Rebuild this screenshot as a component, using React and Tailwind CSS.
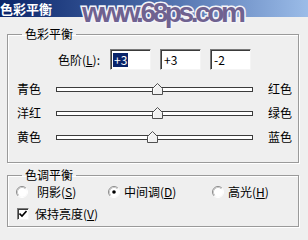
import React from "react";

function Radio({ checked }) {
  return (
    <svg width="12" height="12" viewBox="0 0 12 12" className="shrink-0">
      <circle cx="6" cy="6" r="5" fill="#fff" />
      <path d="M2.11 9.89 A5.5 5.5 0 0 1 9.89 2.11" fill="none" stroke="#8a8a8a" strokeWidth="1" />
      <path d="M9.89 2.11 A5.5 5.5 0 0 1 2.11 9.89" fill="none" stroke="#ffffff" strokeWidth="1" />
      <path d="M2.82 9.18 A4.5 4.5 0 0 1 9.18 2.82" fill="none" stroke="#c8c8c8" strokeWidth="1" />
      {checked && <circle cx="6" cy="6" r="1.8" fill="#000" />}
    </svg>
  );
}

function Thumb() {
  return (
    <svg width="11" height="12" viewBox="0 0 11 12">
      <path d="M0.5 5.5 L5.5 0.5 L10.5 5.5 L10.5 11.5 L0.5 11.5 Z" fill="#f0f0f0" stroke="#505050" strokeWidth="1" />
      <path d="M1.5 10.5 L1.5 5.9 L5.5 1.9" fill="none" stroke="#ffffff" strokeWidth="1" />
    </svg>
  );
}

function SliderRow({ left, right, value }) {
  const center = 98.5 + value * 0.985;
  return (
    <div className="h-[24px] flex items-center pl-[9px]">
      <span className="w-[39px] leading-[14px]">{left}</span>
      <div className="relative w-[197px] h-[5px] border border-[#3c3c3c] bg-white">
        <div className="absolute top-[-5px]" style={{ left: center - 6.5 }}>
          <Thumb />
        </div>
      </div>
      <span className="ml-[15px] leading-[14px]">{right}</span>
    </div>
  );
}

function Field({ children, first }) {
  return (
    <div className="relative w-[41px] h-[21px] bg-white border border-t-[#7a7a7a] border-l-[#7a7a7a] border-r-[#f4f4f4] border-b-[#f4f4f4] shadow-[inset_1px_1px_0_#3a3a3a] flex items-center pl-[2px]">
      {first ? (
        <span className="bg-[#0a246a] text-white leading-[14px] px-[1px]">{children}</span>
      ) : (
        <span className="leading-[14px] px-[1px]">{children}</span>
      )}
    </div>
  );
}

export default function App() {
  return (
    <div className="relative w-[308px] h-[240px] overflow-hidden bg-[#efefef] text-[12px] text-black font-['Noto_Sans_CJK_SC',sans-serif]">
      <div className="h-[17px] bg-gradient-to-r from-[#0a246a] via-[#4a6aa8] to-[#9bbce8] flex items-center">
        <span className="text-white font-bold text-[13px] leading-[15px]">色彩平衡</span>
      </div>

      <div className="absolute left-[82px] top-[1px] font-['Liberation_Sans',sans-serif] font-bold text-[28px] leading-[24px] tracking-[-3.4px] text-[#6f6290] [-webkit-text-stroke:3px_#f4f4f8] [paint-order:stroke_fill]">
        www.68ps.com
      </div>

      <fieldset className="ml-[7px] mt-[10px] w-[292px] border border-[#9a9a9a] shadow-[inset_1px_1px_0_#fff,1px_1px_0_#fff] pb-[13px]">
        <legend className="ml-[14px] px-[3px] leading-[14px]">色彩平衡</legend>
        <div className="flex items-center pt-[8px] h-[29px]">
          <span className="w-[92px] text-right leading-[14px]">
            色阶(<span className="underline">L</span>):
          </span>
          <div className="ml-[10px] flex gap-[9px]">
            <Field first>+3</Field>
            <Field>+3</Field>
            <Field>-2</Field>
          </div>
        </div>
        <div className="mt-[7px]">
          <SliderRow left="青色" right="红色" value={3} />
          <SliderRow left="洋红" right="绿色" value={3} />
          <SliderRow left="黄色" right="蓝色" value={-2} />
        </div>
      </fieldset>

      <fieldset className="ml-[7px] mt-[5px] w-[292px] border border-[#9a9a9a] shadow-[inset_1px_1px_0_#fff,1px_1px_0_#fff] pb-[3px]">
        <legend className="ml-[14px] px-[3px] leading-[14px]">色调平衡</legend>
        <div className="mt-[1px] h-[18px] flex items-center">
          <div className="flex items-center w-[100px] pl-[8px]">
            <Radio />
            <span className="ml-[9px] leading-[14px]">阴影(<span className="underline">S</span>)</span>
          </div>
          <div className="flex items-center w-[104px]">
            <Radio checked />
            <span className="ml-[4px] leading-[14px]">中间调(<span className="underline">D</span>)</span>
          </div>
          <div className="flex items-center">
            <Radio />
            <span className="ml-[4px] leading-[14px]">高光(<span className="underline">H</span>)</span>
          </div>
        </div>
        <div className="mt-[4px] h-[18px] flex items-center pl-[9px]">
          <div className="w-[12px] h-[12px] bg-white border border-t-[#7a7a7a] border-l-[#7a7a7a] border-r-[#f4f4f4] border-b-[#f4f4f4] shadow-[inset_1px_1px_0_#3a3a3a] flex items-center justify-center">
            <svg width="8" height="8" viewBox="0 0 8 8">
              <path d="M0.5 3.5 L3 6 L7.5 1" fill="none" stroke="#000" strokeWidth="1.6" />
            </svg>
          </div>
          <span className="ml-[6px] leading-[14px]">保持亮度(<span className="underline">V</span>)</span>
        </div>
      </fieldset>
    </div>
  );
}
